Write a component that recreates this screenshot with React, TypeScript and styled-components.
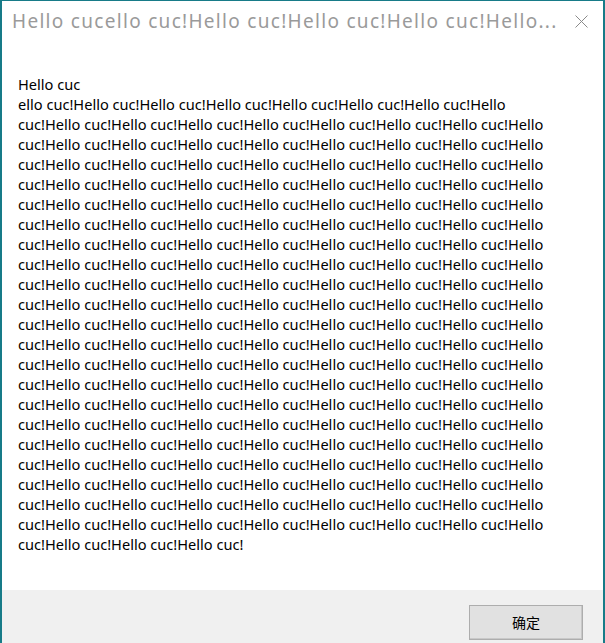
import React from 'react';
import styled, { createGlobalStyle } from 'styled-components';

const Global = createGlobalStyle`
  html, body { margin: 0; padding: 0; background: #177b88; }
  body { width: 605px; height: 643px; overflow: hidden; }
`;

const Desktop = styled.div`
  width: 605px;
  height: 643px;
  box-sizing: border-box;
  padding: 1px 2px 0 2px;
  background: #177b88;
`;

const Window = styled.div`
  height: 100%;
  background: #ffffff;
  display: flex;
  flex-direction: column;
`;

const TitleBar = styled.div`
  height: 40px;
  flex: none;
  display: flex;
  align-items: center;
  padding: 0 15px 0 10px;
  font-family: "Noto Sans", "Noto Sans CJK SC", sans-serif;
`;

const Title = styled.div`
  flex: 1;
  font-size: 19px;
  letter-spacing: 1.3px;
  color: #9a9a9a;
  white-space: nowrap;
  overflow: hidden;
`;

const Close = styled.div`
  width: 14px;
  height: 14px;
  display: flex;
  align-items: center;
  justify-content: center;
`;

const Content = styled.div`
  flex: 1;
  padding: 33px 16px 0 16px;
  font-family: "Noto Sans", "Noto Sans CJK SC", sans-serif;
  font-size: 14.6px;
  line-height: 20px;
  color: #000;
`;

const Line = styled.div`
  white-space: nowrap;
`;

const Footer = styled.div`
  flex: none;
  height: 53px;
  background: #f0f0f0;
  display: flex;
  justify-content: flex-end;
  align-items: flex-start;
  padding: 15px 20px 0 0;
  box-sizing: border-box;
`;

const Button = styled.button`
  width: 114px;
  height: 35px;
  background: #e1e1e1;
  border: 1px solid #adadad;
  box-shadow: inset -1px -1px 0 #c8c8c8;
  font-family: "Noto Sans CJK SC", sans-serif;
  font-size: 14px;
  line-height: 20px;
  color: #000;
  padding: 0 0 2px 0;
`;

const full = 'cuc!Hello cuc!Hello cuc!Hello cuc!Hello cuc!Hello cuc!Hello cuc!Hello cuc!Hello';
const lines = [
  'Hello cuc',
  'ello cuc!Hello cuc!Hello cuc!Hello cuc!Hello cuc!Hello cuc!Hello cuc!Hello',
  ...Array.from({ length: 21 }, () => full),
  'cuc!Hello cuc!Hello cuc!Hello cuc!',
];

export default function App() {
  return (
    <>
      <Global />
      <Desktop>
        <Window>
          <TitleBar>
            <Title>Hello cucello cuc!Hello cuc!Hello cuc!Hello cuc!Hello...</Title>
            <Close>
              <svg width="13" height="13" viewBox="0 0 13 13">
                <path d="M0.5 0.5 L12.5 12.5 M12.5 0.5 L0.5 12.5" stroke="#8a8a8a" strokeWidth="1" fill="none" />
              </svg>
            </Close>
          </TitleBar>
          <Content>
            {lines.map((l, i) => (
              <Line key={i}>{l}</Line>
            ))}
          </Content>
          <Footer>
            <Button>确定</Button>
          </Footer>
        </Window>
      </Desktop>
    </>
  );
}
